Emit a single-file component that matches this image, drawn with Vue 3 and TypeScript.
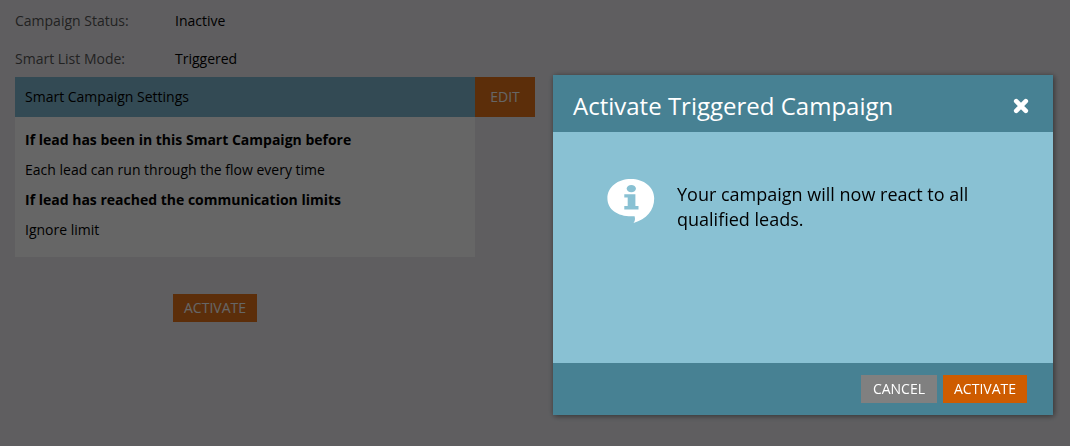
<script setup lang="ts">
import { ref } from 'vue'

interface StatusRow {
  label: string
  value: string
}

interface Setting {
  title: string
  value: string
}

const statusRows: StatusRow[] = [
  { label: 'Campaign Status:', value: 'Inactive' },
  { label: 'Smart List Mode:', value: 'Triggered' },
]

const settings: Setting[] = [
  {
    title: 'If lead has been in this Smart Campaign before',
    value: 'Each lead can run through the flow every time',
  },
  {
    title: 'If lead has reached the communication limits',
    value: 'Ignore limit',
  },
]

const dialogOpen = ref(true)
</script>

<template>
  <main class="page">
    <dl class="status">
      <div v-for="row in statusRows" :key="row.label" class="status-row">
        <dt>{{ row.label }}</dt>
        <dd>{{ row.value }}</dd>
      </div>
    </dl>

    <section class="settings">
      <header class="settings-header">
        <h2>Smart Campaign Settings</h2>
        <button type="button" class="edit">EDIT</button>
      </header>
      <dl class="settings-body">
        <template v-for="item in settings" :key="item.title">
          <dt>{{ item.title }}</dt>
          <dd>{{ item.value }}</dd>
        </template>
      </dl>
    </section>

    <div class="page-actions">
      <button type="button" class="button primary" @click="dialogOpen = true">ACTIVATE</button>
    </div>

    <div v-if="dialogOpen" class="overlay">
      <section class="dialog" role="dialog" aria-modal="true" aria-labelledby="dialog-title">
        <header class="dialog-header">
          <h1 id="dialog-title">Activate Triggered Campaign</h1>
          <button type="button" class="close" aria-label="Close" @click="dialogOpen = false">
            <svg viewBox="0 0 16 16" width="16" height="16" aria-hidden="true">
              <path
                d="M3.2 3.2L12.8 12.8M12.8 3.2L3.2 12.8"
                stroke="#fff"
                stroke-width="4.6"
                stroke-linecap="round"
              />
            </svg>
          </button>
        </header>
        <div class="dialog-body">
          <svg class="info" viewBox="0 0 48 44" width="48" height="44" aria-hidden="true">
            <path
              fill="#fff"
              d="M23.8 0C36.8 0 47.2 8 47.2 19.2C47.2 31.5 39.5 40 26.5 44C28 42.1 28.4 39.8 27.6 37.2C12 38.3 .4 31.2 .4 19.2C.4 8 10.8 0 23.8 0Z"
            />
            <ellipse cx="24.3" cy="9.6" rx="4.6" ry="3.7" fill="#89c1d3" />
            <path fill="#89c1d3" d="M17.3 15.2H28.4V27H31.5V30.4H17.3V27H20.7V18.5H17.3Z" />
          </svg>
          <p>Your campaign will now react to all qualified leads.</p>
        </div>
        <footer class="dialog-footer">
          <button type="button" class="button secondary" @click="dialogOpen = false">CANCEL</button>
          <button type="button" class="button confirm">ACTIVATE</button>
        </footer>
      </section>
    </div>
  </main>
</template>

<style>
body {
  margin: 0;
  background: #eeecf1;
}
</style>

<style scoped>
.page {
  box-sizing: border-box;
  min-height: 100vh;
  padding: 2px 15px;
  background: #eeecf1;
  color: #000;
  font: 14px/20px "Open Sans", "Noto Sans", sans-serif;
}

dl,
dd,
h1,
h2,
p {
  margin: 0;
}

button {
  margin: 0;
  border: 0;
  font: inherit;
  color: #fff;
  cursor: pointer;
}

.status-row {
  display: flex;
  line-height: 38px;
}

.status-row dt {
  width: 160px;
  color: #555;
}

.settings {
  max-width: 520px;
  margin-top: -1px;
}

.settings-header {
  display: flex;
  height: 40px;
}

.settings-header h2 {
  flex: 1;
  padding-left: 10px;
  background: #80b9d2;
  font-size: 14px;
  font-weight: 400;
  line-height: 40px;
}

.edit {
  width: 60px;
  padding: 0;
  background: #e6731b;
}

.settings-body {
  margin-right: 60px;
  padding: 8px 10px 12px;
  background: #fff;
  line-height: 30px;
}

.settings-body dt {
  font-weight: 700;
}

.page-actions {
  padding: 37px 0 0 158px;
}

.button {
  height: 28px;
  padding: 0 11px;
  line-height: 28px;
}

.primary {
  background: #e6731b;
}

.secondary {
  padding: 0 12px;
  background: #808080;
}

.confirm {
  background: #ce5c00;
}

.overlay {
  position: fixed;
  inset: 0;
  display: flex;
  justify-content: flex-end;
  align-items: flex-start;
  padding: 75px 17px 0;
  background: rgba(0, 0, 0, 0.6);
}

.dialog {
  width: 100%;
  max-width: 500px;
  background: #89c1d3;
  box-shadow: 1px 1px 6px rgba(0, 0, 0, 0.5);
}

.dialog-header {
  display: flex;
  justify-content: space-between;
  align-items: center;
  padding: 15px 24px 10px 20px;
  background: #478193;
}

.dialog-header h1 {
  color: #fff;
  font-size: 24px;
  font-weight: 400;
  line-height: 32px;
}

.close {
  display: flex;
  padding: 0;
  background: none;
}

.dialog-body {
  display: flex;
  gap: 22px;
  box-sizing: border-box;
  min-height: 231px;
  padding: 47px 54px;
}

.info {
  flex: none;
}

.dialog-body p {
  padding-top: 3px;
  font-size: 18px;
  line-height: 25px;
}

.dialog-footer {
  display: flex;
  justify-content: flex-end;
  gap: 6px;
  padding: 12px 26px 12px 20px;
  background: #478193;
}
</style>
